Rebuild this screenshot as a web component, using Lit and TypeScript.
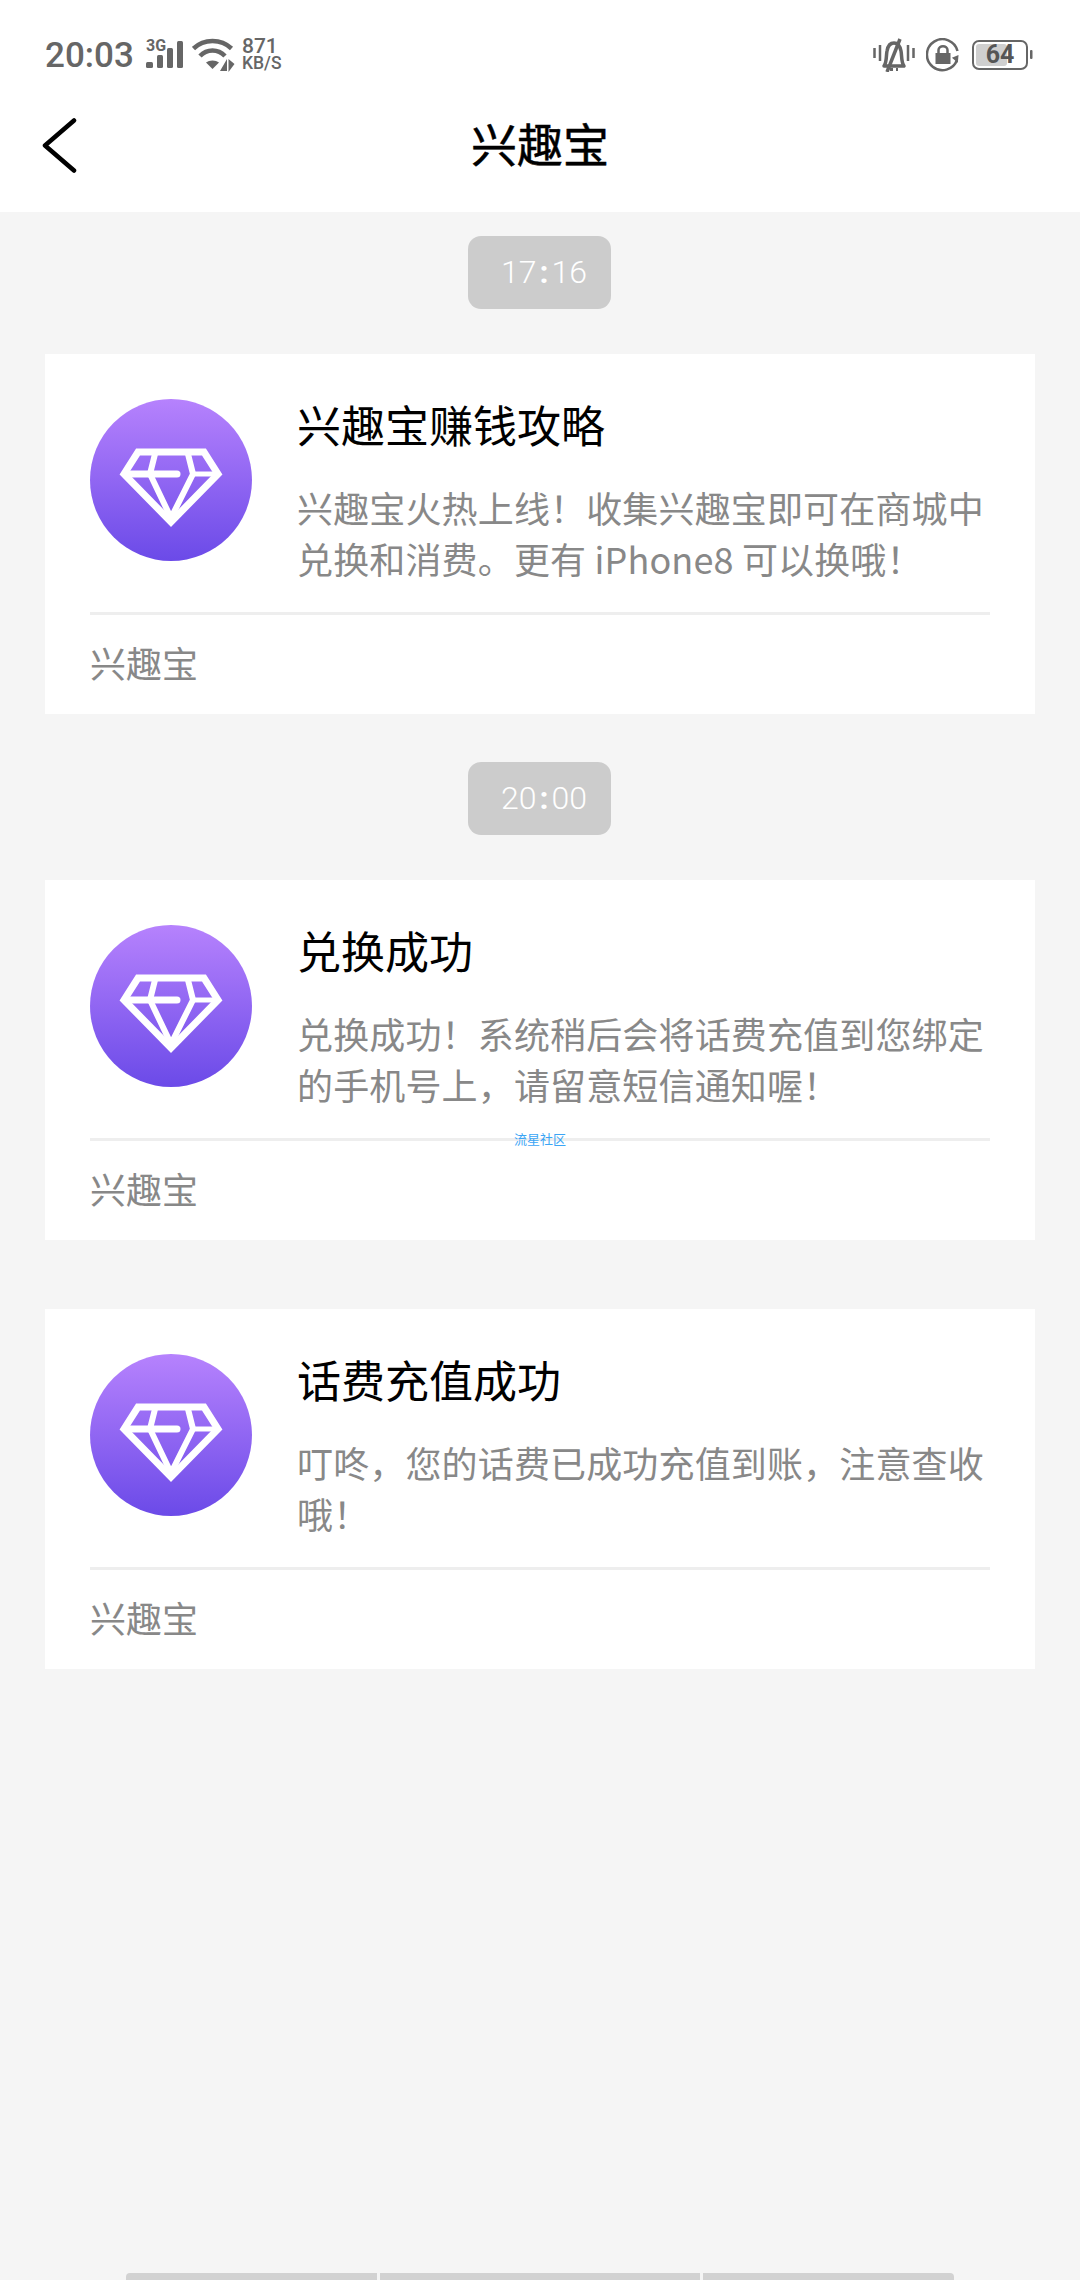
import { LitElement, html, css, svg } from "lit";
import { customElement } from "lit/decorators.js";

const diamond = svg`<svg class="av" viewBox="0 0 162 162">
  <defs><linearGradient id="g" x1="0" y1="0" x2="0" y2="1"><stop offset="0" stop-color="#b682fd"/><stop offset="1" stop-color="#6b4ae8"/></linearGradient></defs>
  <circle cx="81" cy="81" r="81" fill="url(#g)"/>
  <g fill="none" stroke="#fff" stroke-width="7" stroke-linejoin="miter">
    <path d="M48 53H114L128 75L81 123L34 75Z"/>
    <path d="M65 55L60 75L81 119L103 75L98 55" stroke-width="6"/>
    <path d="M36 75H87" stroke-linecap="round"/>
    <path d="M100 75H126" stroke-width="5"/>
  </g>
</svg>`;

interface Msg { time?: string; title: string; lines: string[]; mark?: boolean; }
const msgs: Msg[] = [
  { time: "17:16", title: "兴趣宝赚钱攻略", lines: ["兴趣宝火热上线！收集兴趣宝即可在商城中", "兑换和消费。更有 iPhone8 可以换哦！"] },
  { time: "20:00", title: "兑换成功", lines: ["兑换成功！系统稍后会将话费充值到您绑定", "的手机号上，请留意短信通知喔！"], mark: true },
  { title: "话费充值成功", lines: ["叮咚，您的话费已成功充值到账，注意查收", "哦！"] },
];

@customElement("app-root")
export class AppRoot extends LitElement {
  static styles = css`
    :host { display: flex; flex-direction: column; min-height: 2280px; background: #f5f5f5;
      font-family: "Noto Sans CJK SC", "Noto Sans", sans-serif; text-spacing-trim: space-all; }
    .head { background: #fff; height: 212px; display: flex; flex-direction: column; }
    .status { height: 90px; display: flex; align-items: flex-start; color: #666; font-family: Roboto, sans-serif; }
    .status svg { display: block; flex: none; }
    .time { font-size: 35px; font-weight: 500; line-height: 40px; margin: 36px 0 0 45px; width: 101px; }
    .sig { margin-top: 32px; width: 46px; }
    .wifi { margin-top: 38px; width: 50px; }
    .speed { margin-top: 37px; display: flex; flex-direction: column; font-weight: 500; }
    .speed b { font-weight: 500; font-size: 21px; line-height: 18px; }
    .speed i { font-style: normal; font-weight: 500; font-size: 17.5px; line-height: 16px; }
    .spacer { flex: 1; }
    .bell { margin: 38px 11px 0 0; }
    .lock { margin: 38px 12px 0 0; }
    .batt { margin: 40px 47px 0 0; width: 61px; height: 30px; position: relative; }
    .batt span { position: absolute; left: 0; width: 56px; top: 0; text-align: center; line-height: 30px;
      font-size: 25px; font-weight: 700; color: #555; }
    .nav { flex: 1; display: flex; align-items: center; justify-content: center; position: relative; margin-top: -2px; padding-bottom: 17px; }
    .nav h1 { margin: 0; font-size: 46px; font-weight: 400; line-height: 60px; color: #000; -webkit-text-stroke: 0.5px #000; }
    .back { position: absolute; left: 42px; top: 29px; display: block; }
    .list { display: flex; flex-direction: column; padding: 24px 45px 0; }
    .pill { align-self: center; margin-right: 1px; width: 143px; height: 73px; border-radius: 13px; background: #ccc; color: #fff;
      font-size: 32px; line-height: 73px; text-align: center; box-sizing: border-box; padding-left: 9px; margin-bottom: 45px;
      font-family: Roboto, sans-serif; font-weight: 300; }
    .pill em { font-style: normal; margin: 0 3px; font-weight: 700; }
    .card { background: #fff; height: 360px; margin-bottom: 48px; box-sizing: border-box; padding: 45px 45px 0; display: flex; flex-direction: column; position: relative; }
    .card.tail { margin-top: 21px; }
    .row { display: flex; height: 213px; border-bottom: 3px solid #eee; gap: 45px; }
    .av { width: 162px; height: 162px; display: block; flex: none; }
    .txt { flex: 1; min-width: 0; }
    .title { font-size: 44px; line-height: 56px; color: #000; white-space: nowrap; margin-top: -3px; }
    .body { margin-top: 30px; font-size: 36px; line-height: 51px; color: #888; white-space: nowrap; letter-spacing: 0.15px; }
    .foot { flex: 1; font-size: 36px; line-height: 94px; color: #888; }
    .mark { position: absolute; left: 469px; top: 249px; font-size: 13px; line-height: 20px; color: #3ba5f5; white-space: nowrap; }
    .bars { margin-top: auto; align-self: center; display: flex; gap: 3px; height: 7px; width: 828px; }
    .bars div { background: #d2d2d2; }
    .bars .a { width: 251px; border-radius: 4px 0 0 0; }
    .bars .b { width: 320px; }
    .bars .c { flex: 1; border-radius: 0 4px 0 0; }
  `;

  render() {
    return html`
      <div class="head">
        <div class="status">
          <div class="time">20:03</div>
          <svg class="sig" width="46" height="38" viewBox="0 -6 46 38" fill="#666">
            <text x="0" y="13" font-size="16" font-weight="700" font-family="Roboto, sans-serif">3G</text>
            <rect x="0" y="24" width="7" height="6" rx="1.5"/>
            <rect x="11" y="17" width="6" height="13" rx="1.5"/>
            <rect x="21" y="10" width="6" height="20" rx="1.5"/>
            <rect x="31" y="3" width="6" height="27" rx="1.5"/>
          </svg>
          <svg class="wifi" width="50" height="34" viewBox="0 0 50 34">
            <g fill="none" stroke="#666" stroke-width="4.500">
              <path d="M1.500 10.500C12 0.500 29 0.500 39.500 10.500"/>
              <path d="M8 18C15 10.500 26 10.500 33 18"/>
            </g>
            <path d="M20.500 31L14 24.500C17.500 21.800 23.500 21.800 27 24.500Z" fill="#666"/>
            <path d="M35 21V33H28ZM36.500 21V34L42.500 26Z" fill="#666"/>
          </svg>
          <div class="speed"><b>871</b><i>KB/S</i></div>
          <div class="spacer"></div>
          <svg class="bell" width="42" height="34" viewBox="0 0 42 34" fill="none" stroke="#666">
            <path d="M1.500 10V20M7 7V23M35 7V23M40.500 10V20" stroke-width="2.500"/>
            <path d="M11 28C14 24 13 18 14 13C15 7 18 5 21 5C25 5 27 8 28 13C29 18 28 24 31 28Z" stroke-width="3.500" stroke-linejoin="round"/>
            <path d="M27 1L14 34" stroke-width="3.500"/>
            <path d="M17 31.500H20M23 31.500H25" stroke-width="3"/>
          </svg>
          <svg class="lock" width="34" height="34" viewBox="0 0 34 34" fill="none">
            <path d="M31 22A15.500 15.500 0 1 1 31.500 13" stroke="#666" stroke-width="2.500"/>
            <path d="M26 19L33 17.500L31 25Z" fill="#666" transform="rotate(-10 30 20)"/>
            <rect x="9.500" y="15" width="15" height="11" fill="#666"/>
            <path d="M12.500 15V12C12.500 7 21.500 7 21.500 12V15" stroke="#666" stroke-width="2.500"/>
          </svg>
          <div class="batt">
            <svg width="61" height="30" viewBox="0 0 61 30" fill="none">
              <rect x="1" y="1" width="54" height="28" rx="6" stroke="#666" stroke-width="2"/>
              <rect x="4" y="4" width="31" height="22" rx="3" fill="#cfcfcf"/>
              <rect x="58" y="10" width="2.500" height="9" rx="1" fill="#666"/>
            </svg>
            <span>64</span>
          </div>
        </div>
        <div class="nav">
          <svg class="back" width="36" height="58" viewBox="0 0 36 58" fill="none">
            <path d="M32 3.500L3 28.500L32 53.500" stroke="#000" stroke-width="4.500" stroke-linecap="round" stroke-linejoin="round"/>
          </svg>
          <h1>兴趣宝</h1>
        </div>
      </div>
      <div class="list">
        ${msgs.map((m) => html`
          ${m.time ? html`<div class="pill">${m.time.split(":")[0]}<em>:</em>${m.time.split(":")[1]}</div>` : ""}
          <div class="card ${m.time ? "" : "tail"}">
            <div class="row">
              ${diamond}
              <div class="txt">
                <div class="title">${m.title}</div>
                <div class="body">${m.lines.map((l) => html`<div>${l}</div>`)}</div>
              </div>
            </div>
            <div class="foot">兴趣宝</div>
            ${m.mark ? html`<div class="mark">流星社区</div>` : ""}
          </div>
        `)}
      </div>
      <div class="bars"><div class="a"></div><div class="b"></div><div class="c"></div></div>
    `;
  }
}
